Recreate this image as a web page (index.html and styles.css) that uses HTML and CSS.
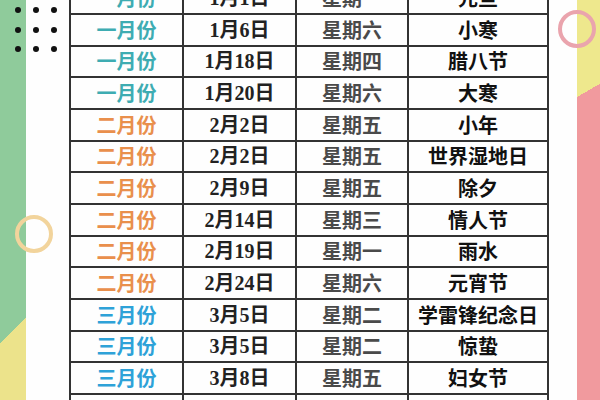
FILE: index.html
```html
<!DOCTYPE html>
<html lang="zh">
<head>
<meta charset="utf-8">
<title>节日表</title>
<link rel="stylesheet" href="styles.css">
</head>
<body>
<div class="page">
  <div class="strip-left"></div>
  <main class="main">
    <table class="cal">
      <tbody>
        <tr><td class="m m1">一月份</td><td class="d">1月1日</td><td class="w">星期一</td><td class="f">元旦</td></tr>
        <tr><td class="m m1">一月份</td><td class="d">1月6日</td><td class="w">星期六</td><td class="f">小寒</td></tr>
        <tr><td class="m m1">一月份</td><td class="d">1月18日</td><td class="w">星期四</td><td class="f">腊八节</td></tr>
        <tr><td class="m m1">一月份</td><td class="d">1月20日</td><td class="w">星期六</td><td class="f">大寒</td></tr>
        <tr><td class="m m2">二月份</td><td class="d">2月2日</td><td class="w">星期五</td><td class="f">小年</td></tr>
        <tr><td class="m m2">二月份</td><td class="d">2月2日</td><td class="w">星期五</td><td class="f">世界湿地日</td></tr>
        <tr><td class="m m2">二月份</td><td class="d">2月9日</td><td class="w">星期五</td><td class="f">除夕</td></tr>
        <tr><td class="m m2">二月份</td><td class="d">2月14日</td><td class="w">星期三</td><td class="f">情人节</td></tr>
        <tr><td class="m m2">二月份</td><td class="d">2月19日</td><td class="w">星期一</td><td class="f">雨水</td></tr>
        <tr><td class="m m2">二月份</td><td class="d">2月24日</td><td class="w">星期六</td><td class="f">元宵节</td></tr>
        <tr><td class="m m3">三月份</td><td class="d">3月5日</td><td class="w">星期二</td><td class="f">学雷锋纪念日</td></tr>
        <tr><td class="m m3">三月份</td><td class="d">3月5日</td><td class="w">星期二</td><td class="f">惊蛰</td></tr>
        <tr><td class="m m3">三月份</td><td class="d">3月8日</td><td class="w">星期五</td><td class="f">妇女节</td></tr>
        <tr><td class="m m3">三月份</td><td class="d">3月12日</td><td class="w">星期二</td><td class="f">植树节</td></tr>
      </tbody>
    </table>
  </main>
  <div class="strip-right"></div>

  <div class="dots">
    <span></span><span></span><span></span>
    <span></span><span></span><span></span>
    <span></span><span></span><span></span>
  </div>
  <div class="ring ring-pink"></div>
  <div class="ring ring-orange"></div>
</div>
</body>
</html>
```

FILE: styles.css
```css
html, body {
  margin: 0;
  padding: 0;
  background: #fff;
}

.page {
  position: relative;
  width: 600px;
  height: 400px;
  overflow: hidden;
  display: flex;
  background: #fefefe;
}

.strip-left {
  flex: 0 0 26px;
  background: linear-gradient(135deg, #8fcb9b 243px, #ece38b 243px);
}

.strip-right {
  flex: 0 0 23px;
  background: linear-gradient(150deg, #eee88d 84px, #f19a9e 84px);
}

.main {
  flex: 1;
  padding-left: 43px;
}

.cal {
  border-collapse: collapse;
  margin-top: -18.7px;
  table-layout: fixed;
  width: 480px;
  font-family: "Noto Sans CJK SC", sans-serif;
  font-weight: 700;
  font-size: 20px;
}

.cal td {
  border: 2px solid #333;
  height: 29.67px;
  padding: 0;
  text-align: center;
  vertical-align: middle;
  line-height: 1;
  white-space: nowrap;
}

.cal td.m { width: 111px; }
.cal td.d { width: 111px; }
.cal td.w { width: 110px; }
.cal td.f { width: 138px; }

.m1 { color: #3eacb2; }
.m2 { color: #e98f4c; }
.m3 { color: #2ea2d8; }

.d {
  color: #222;
  font-family: "Liberation Serif", "Noto Sans CJK SC", serif;
}

.w { color: #4a4a4a; }

.f { color: #111; }

.dots {
  position: absolute;
  left: 15px;
  top: 7px;
  display: grid;
  grid-template-columns: repeat(3, 6px);
  column-gap: 12px;
  row-gap: 13.5px;
}

.dots span {
  width: 6px;
  height: 6px;
  border-radius: 50%;
  background: #111;
}

.ring {
  position: absolute;
  width: 38px;
  height: 38px;
  box-sizing: border-box;
  border-radius: 50%;
  border: 4px solid;
}

.ring-pink {
  left: 558px;
  top: 10px;
  border-color: #eaa4ad;
}

.ring-orange {
  left: 15px;
  top: 215px;
  border-color: #f2d49c;
}
```
